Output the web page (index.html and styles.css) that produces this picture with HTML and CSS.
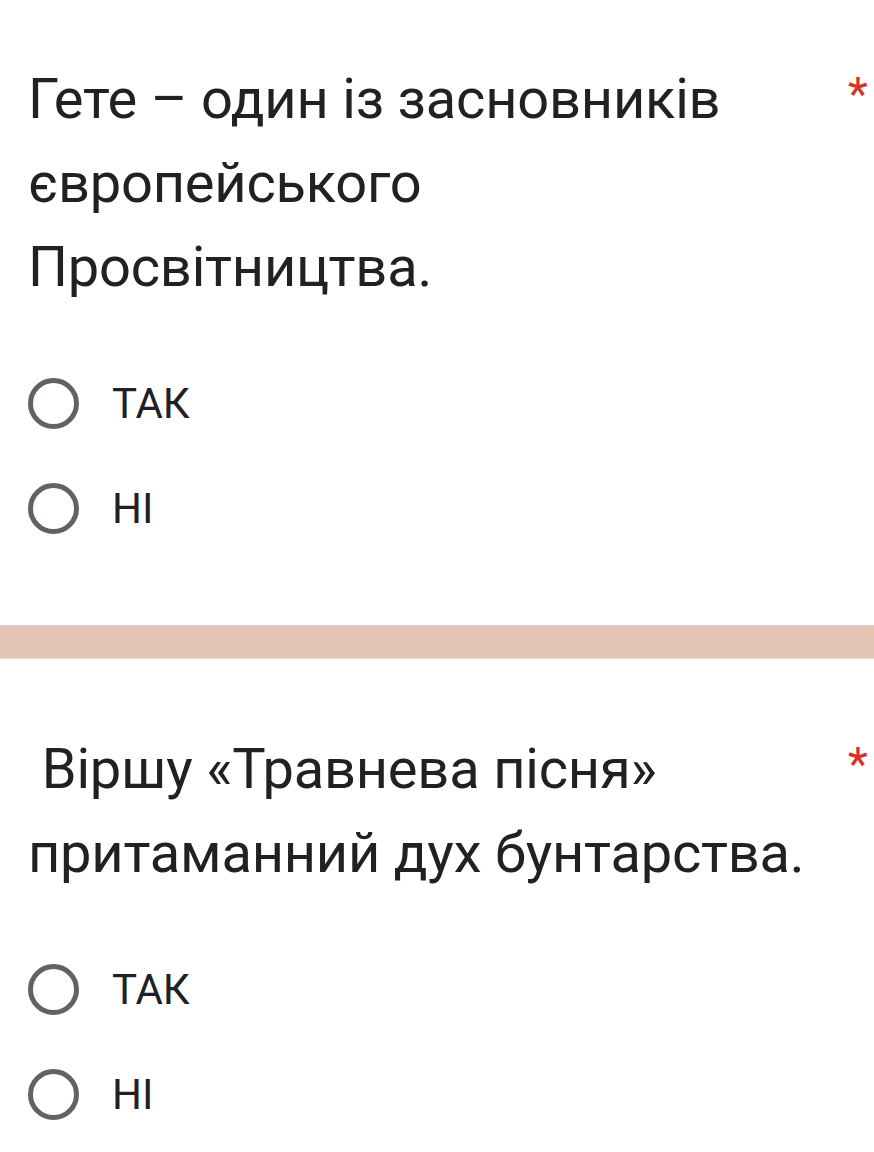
FILE: index.html
```html
<!DOCTYPE html>
<html lang="uk">
<head>
<meta charset="utf-8">
<link rel="stylesheet" href="styles.css">
</head>
<body>
<section class="question q1">
  <div class="q-head">
    <div class="q-title">Гете – один із засновників європейського Просвітництва.</div>
    <span class="req">*</span>
  </div>
  <div class="options">
    <label class="opt"><span class="radio"></span><span class="opt-label">ТАК</span></label>
    <label class="opt"><span class="radio"></span><span class="opt-label">НІ</span></label>
  </div>
</section>
<div class="divider"></div>
<section class="question q2">
  <div class="q-head">
    <div class="q-title">&nbsp;Віршу «Травнева пісня» притаманний дух бунтарства.</div>
    <span class="req">*</span>
  </div>
  <div class="options">
    <label class="opt"><span class="radio"></span><span class="opt-label">ТАК</span></label>
    <label class="opt"><span class="radio"></span><span class="opt-label">НІ</span></label>
  </div>
</section>
</body>
</html>
```
FILE: styles.css
```css
html, body {
  margin: 0;
  padding: 0;
  background: #ffffff;
}
body {
  font-family: Roboto, "Noto Sans", sans-serif;
  color: #202124;
  width: 874px;
  height: 1152px;
  overflow: hidden;
}
.question {
  padding: 0 0 0 28px;
}
.q1 {
  padding-top: 57px;
  padding-bottom: 64px;
}
.q2 {
  padding-top: 68px;
}
.q-head {
  display: flex;
  align-items: flex-start;
}
.q-title {
  flex: 1;
  font-size: 56px;
  line-height: 84px;
  letter-spacing: -0.2px;
  padding-right: 28px;
}
.req {
  color: #d93025;
  font-size: 46px;
  line-height: 46px;
  margin-top: 14px;
  width: 20px;
  margin-right: 6px;
  flex: none;
}
.options {
  margin-top: 42px;
  display: flex;
  flex-direction: column;
}
.opt {
  height: 105px;
  display: flex;
  align-items: center;
}
.radio {
  box-sizing: border-box;
  width: 51px;
  height: 51px;
  border: 5px solid #5f6368;
  border-radius: 50%;
  flex: none;
}
.opt-label {
  margin-left: 33px;
  font-size: 42px;
  line-height: 50px;
  color: #202124;
}
.divider {
  height: 32px;
  background: #e3c4b5;
  border-top: 1px solid #dcd2ce;
  border-bottom: 1px solid #e6e0d6;
}
```
